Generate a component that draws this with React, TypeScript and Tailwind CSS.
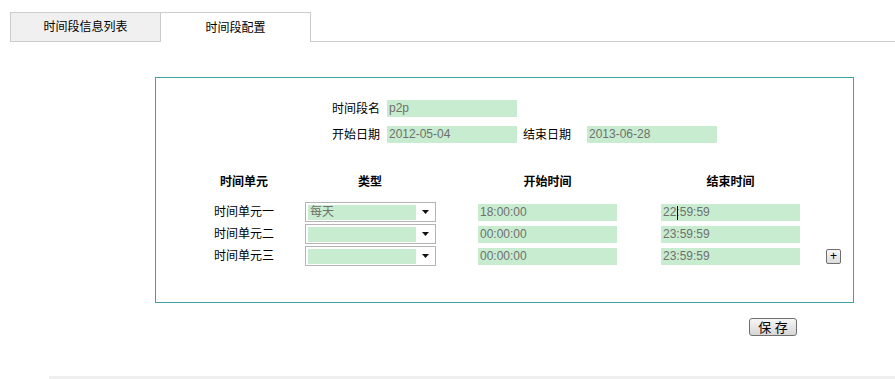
import React from "react";

const cjk = { fontFamily: '"Liberation Sans", "Noto Sans CJK SC", sans-serif' };

function Field({ w, value, children }: { w: string; value?: string; children?: React.ReactNode }) {
  return (
    <div className={`${w} h-[17px] bg-[#c7eccf] text-[#707070] text-[12px] leading-[17px] pl-[2px] whitespace-nowrap overflow-hidden`}>
      {children ?? value}
    </div>
  );
}

function Select({ value }: { value?: string }) {
  return (
    <div className="ml-[1px] w-[131px] h-[20px] border border-[#b4b4b4] bg-white flex items-center pl-[2px] pr-[6px]">
      <div className="w-[108px] h-[15px] bg-[#c7eccf] text-[#707070] text-[12px] leading-[15px] pl-[2px]">{value}</div>
      <div className="flex-1 flex justify-end">
        <svg width="7" height="4" viewBox="0 0 7 4"><path d="M0 0H7L3.5 4Z" fill="#111" /></svg>
      </div>
    </div>
  );
}

function Row({ label, type, start, end, plus, caret }: { label: string; type?: string; start: string; end: string; plus?: boolean; caret?: boolean }) {
  return (
    <div className="flex items-center h-[22px]">
      <div className="ml-[28px] w-[120px] text-center text-[12px] text-black">{label}</div>
      <div className="w-[132px]"><Select value={type} /></div>
      <div className="ml-[42px]"><Field w="w-[139px]" value={start} /></div>
      <div className="ml-[44px]">
        <Field w="w-[139px]">
          {caret ? (
            <>
              22<span className="relative">:<span className="absolute left-[1px] top-[1px] w-px h-[14px] bg-black" /></span>59:59
            </>
          ) : (
            end
          )}
        </Field>
      </div>
      {plus && (
        <div className="ml-[26px] w-[15px] h-[15px] border border-[#6f6f6f] rounded-[2px] bg-gradient-to-b from-[#f8f8f8] to-[#dcdcdc] flex items-center justify-center text-[12px] leading-none text-black">
          +
        </div>
      )}
    </div>
  );
}

export default function App() {
  return (
    <div className="w-[895px] h-[379px] bg-white overflow-hidden" style={cjk}>
      {/* Tabs */}
      <div className="flex items-end pt-[12px] pl-[10px]">
        <div className="w-[151px] h-[30px] border border-[#cccccc] bg-[#f0f0f0] flex items-center justify-center text-[12px] text-black">
          时间段信息列表
        </div>
        <div className="w-[150px] h-[30px] border-t border-r border-[#cccccc] bg-white flex items-center justify-center text-[12px] text-black">
          时间段配置
        </div>
        <div className="flex-1 border-b border-[#cccccc]" />
      </div>

      {/* Box */}
      <div className="ml-[155px] mt-[35px] w-[699px] h-[226px] border border-[#3fa1a1] pt-[22px]">
        <div className="flex items-center h-[17px] ml-[176px]">
          <div className="w-[48px] text-[12px] text-black">时间段名</div>
          <div className="ml-[7px]"><Field w="w-[130px]" value="p2p" /></div>
        </div>
        <div className="flex items-center h-[17px] ml-[176px] mt-[9px]">
          <div className="w-[48px] text-[12px] text-black">开始日期</div>
          <div className="ml-[7px]"><Field w="w-[130px]" value="2012-05-04" /></div>
          <div className="ml-[6px] w-[48px] text-[12px] text-black">结束日期</div>
          <div className="ml-[16px]"><Field w="w-[130px]" value="2013-06-28" /></div>
        </div>

        <div className="flex items-center h-[18px] mt-[30px] font-bold text-[12px] text-black">
          <div className="ml-[28px] w-[120px] text-center">时间单元</div>
          <div className="w-[132px] text-center">类型</div>
          <div className="ml-[42px] w-[139px] text-center">开始时间</div>
          <div className="ml-[44px] w-[139px] text-center">结束时间</div>
        </div>

        <div className="mt-[10px]">
          <Row label="时间单元一" type="每天" start="18:00:00" end="22:59:59" caret />
          <Row label="时间单元二" start="00:00:00" end="23:59:59" />
          <Row label="时间单元三" start="00:00:00" end="23:59:59" plus />
        </div>
      </div>

      {/* Save */}
      <div className="ml-[749px] mt-[15px] w-[48px] h-[18px] border border-[#707070] rounded-[3px] bg-gradient-to-b from-[#f7f7f7] to-[#d6d6d6] flex items-center justify-center text-[13px] leading-none text-black">
        保 存
      </div>

      <div className="ml-[49px] mt-[40px] h-[4px] bg-[#efefef]" />
    </div>
  );
}
